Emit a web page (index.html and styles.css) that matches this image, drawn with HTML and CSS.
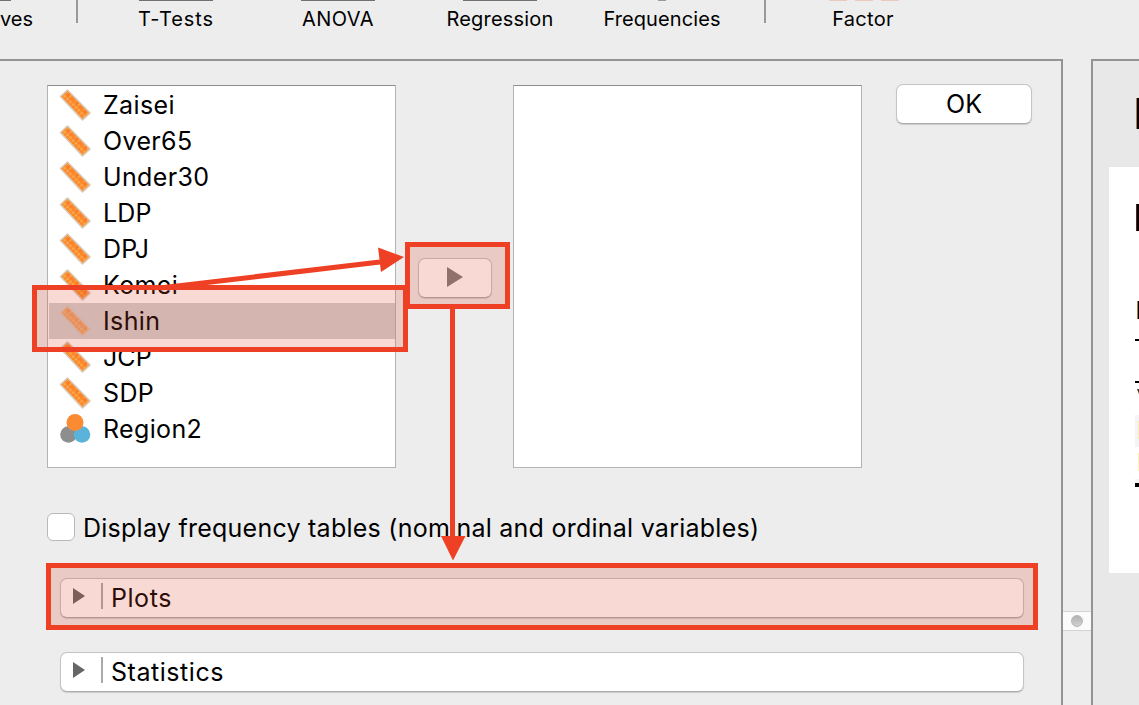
FILE: index.html
```
<!DOCTYPE html>
<html lang="en">
<head>
<meta charset="utf-8">
<title>Descriptives</title>
<link rel="stylesheet" href="styles.css">
</head>
<body>
<svg width="0" height="0" class="defs">
  <defs>
    <pattern id="grain" width="4" height="4" patternUnits="userSpaceOnUse" patternTransform="rotate(45)">
      <rect width="4" height="4" fill="#fb9130"/>
      <rect width="2" height="2" fill="#fda84c"/>
      <rect x="2" y="2" width="2" height="2" fill="#fa8430"/>
    </pattern>
    <symbol id="ruler" viewBox="0 0 32 32">
      <path d="M1.5 7.5L8.500 1L31 24L23.500 31Z" fill="url(#grain)" stroke="#d9c8b4" stroke-width="1.600" stroke-linejoin="round"/>
      <path d="M8 4L28 24.500" stroke="#ff7622" stroke-width="2.500" stroke-dasharray="4 2" opacity=".7"/>
    </symbol>
    <symbol id="nominal" viewBox="0 0 32 32">
      <circle cx="9.500" cy="21.500" r="8.300" fill="#8e8e8e"/>
      <circle cx="23" cy="21.500" r="8.300" fill="#5ab3da"/>
      <circle cx="16" cy="9.500" r="8.500" fill="#fb8b33"/>
    </symbol>
  </defs>
</svg>
<div class="window">
  <header class="toolbar">
    <div class="tool tool-cut"><i class="edge edge-cut"></i><span class="t-ves">ves</span></div>
    <i class="sep"></i>
    <div class="tool tool-first"><i class="edge"></i><span class="t-ttest">T-Tests</span></div>
    <div class="tool"><i class="edge"></i><span class="t-anova">ANOVA</span></div>
    <div class="tool"><i class="edge"></i><span class="t-reg">Regression</span></div>
    <div class="tool"><i class="edge edge-dot"></i><span class="t-freq">Frequencies</span></div>
    <i class="sep sep-last"></i>
    <div class="tool tool-factor"><div class="pinks"><i></i><i></i><i></i></div><span class="t-factor">Factor</span></div>
  </header>
  <main class="workspace">
    <section class="analysis">
      <div class="assign">
        <ul class="list">
          <li><svg><use href="#ruler"/></svg><span>Zaisei</span></li>
          <li><svg><use href="#ruler"/></svg><span>Over65</span></li>
          <li><svg><use href="#ruler"/></svg><span>Under30</span></li>
          <li><svg><use href="#ruler"/></svg><span class="caps">LDP</span></li>
          <li><svg><use href="#ruler"/></svg><span class="caps">DPJ</span></li>
          <li><svg><use href="#ruler"/></svg><span>Komei</span></li>
          <li class="selected"><svg><use href="#ruler"/></svg><span>Ishin</span></li>
          <li><svg><use href="#ruler"/></svg><span class="caps">JCP</span></li>
          <li><svg><use href="#ruler"/></svg><span>SDP</span></li>
          <li><svg><use href="#nominal"/></svg><span>Region2</span></li>
        </ul>
        <button class="btn move"><svg width="16" height="20" viewBox="0 0 16 20"><path d="M0 0L16 10L0 20Z" fill="#7e7e7e"/></svg></button>
        <div class="list target"></div>
        <button class="btn ok"><span>OK</span></button>
      </div>
      <label class="check"><i class="box"></i><span class="t-display">Display frequency tables (nominal and ordinal variables)</span></label>
      <div class="btn section"><svg width="12" height="16" viewBox="0 0 12 16"><path d="M0 0L12 8L0 16Z" fill="#666"/></svg><i class="rule"></i><span>Plots</span></div>
      <div class="btn section"><svg width="12" height="16" viewBox="0 0 12 16"><path d="M0 0L12 8L0 16Z" fill="#666"/></svg><i class="rule"></i><span>Statistics</span></div>
    </section>
    <div class="splitter"><div class="grip"><i></i></div></div>
    <aside class="results">
      <i class="stem stem-title"></i>
      <div class="sheet">
        <i class="stem stem-head"></i>
        <i class="stem stem-sub"></i>
        <i class="line line-top"></i>
        <i class="line line-mid"></i>
        <i class="tick"></i>
        <div class="stripe"><i></i></div>
        <i class="yellow"></i>
        <i class="line line-end"></i>
      </div>
    </aside>
  </main>
  <div class="callout callout-row"></div>
  <div class="callout callout-move"></div>
  <div class="callout callout-plots"></div>
  <svg class="arrows" width="1139" height="705" viewBox="0 0 1139 705" fill="#ee4025">
    <path d="M160 288L380 262" stroke="#ee4025" stroke-width="5"/>
    <path d="M378 247.500L404 257L381 272Z"/>
    <path d="M450 307H455V540H450Z"/>
    <path d="M441 536H465.500L453 560.500Z"/>
  </svg>
</div>
</body>
</html>
```
FILE: styles.css
```
* { box-sizing: border-box; }
body { margin: 0; background: #ededed; font-family: Inter, "Liberation Sans", sans-serif; color: #000; overflow: hidden; }
i { display: block; font-style: normal; flex: none; }
svg { display: block; flex: none; }
span { white-space: nowrap; }
.defs { position: absolute; }
.window { position: relative; width: 1139px; height: 705px; overflow: hidden; display: flex; flex-direction: column; }

.toolbar { display: flex; height: 59px; flex: none; font-size: 20px; line-height: 24px; }
.tool { width: 162px; flex: none; display: flex; flex-direction: column; align-items: center; gap: 6px; }
.tool-cut { width: 76px; align-items: flex-start; }
.tool-first { margin-left: 17px; }
.edge { width: 74px; height: 1px; background: #737071; }
.edge-cut { width: 11px; }
.edge-dot { width: 8px; background: #999; }
.sep { width: 2px; height: 23px; background: #999; }
.sep-last { margin-left: 21px; }
.tool-factor { margin-left: 17px; }
.pinks { display: flex; gap: 8px; }
.pinks i { width: 18px; height: 1px; background: #e9cbbb; }
.t-ttest { letter-spacing: .9px; }
.t-anova { letter-spacing: .45px; }
.t-reg { letter-spacing: .2px; }
.t-freq { letter-spacing: .1px; }
.t-factor { letter-spacing: .3px; margin-left: -2px; }

.workspace { display: flex; height: 646px; }
.analysis { width: 1063px; flex: none; border: 2px solid #949494; border-left: 0; border-bottom: 0; padding: 24px 0 0 47px; font-size: 25px; line-height: 36px; }
.assign { display: flex; height: 383px; }
.list { width: 349px; height: 383px; flex: none; margin: 0; padding: 1px 0 0 1px; list-style: none; background: #fff; border: 1px solid #b4b4b4; border-top-color: #8e8e8e; }
.list li { display: flex; height: 36px; align-items: center; padding-left: 10px; gap: 12px; letter-spacing: .36px; }
.list .caps { letter-spacing: .1px; }
.list svg { width: 32px; height: 32px; }
.list .selected { background: #d2d2d2; }
.selected svg { opacity: .6; }
.btn { display: flex; align-items: center; justify-content: center; background: #fff; border: 1px solid #c4c4c4; border-bottom-color: #adadad; border-radius: 7px; box-shadow: 0 1px 1px rgba(0,0,0,.14); height: 40px; padding: 0; font: inherit; color: inherit; flex: none; }
.move { width: 74px; margin: 173px 0 0 22px; padding: 0 1px 2px 0; }
.target { margin-left: 21px; }
.ok { width: 136px; margin: -1px 0 0 34px; }
.check { display: flex; height: 28px; margin-top: 45px; align-items: center; gap: 8px; }
.t-display { letter-spacing: .25px; padding-top: 2px; }
.box { width: 28px; height: 28px; background: #fff; border: 1px solid #b9b9b9; border-radius: 6px; }
.section { width: 964px; margin: 37px 0 0 13px; justify-content: flex-start; padding-left: 12px; letter-spacing: .55px; }
.section + .section { margin-top: 34px; }
.section svg { margin-top: -4px; }
.rule { width: 2px; height: 26px; margin: -4px 8px 0 16px; background: #aaa; }

.splitter { width: 28px; flex: none; padding-top: 552px; }
.grip { height: 20px; background: #fbfbfb; border: solid #d3d3d3; border-width: 1px 0; display: flex; align-items: center; justify-content: center; }
.grip i { width: 12px; height: 12px; border-radius: 50%; background: linear-gradient(#b2b2b2, #d0d0d0); border: 1px solid #b7b7b7; }
.results { width: 48px; flex: none; background: #e8e8e8; border: 2px solid #949494; border-width: 2px 0 0 2px; padding: 37px 0 0 16px; }
.stem { background: #000; width: 4px; border-left: 1px solid #ba7b3e; }
.stem-title { height: 31px; margin-left: 27px; }
.sheet { height: 406px; margin-top: 38px; background: #fff; padding-top: 37px; overflow: hidden; }
.stem-head { height: 27px; margin-left: 27px; border-left-color: #5b2114; }
.stem-sub { height: 18px; margin: 70px 0 0 28px; }
.line { height: 2px; margin-left: 26px; background: #000; }
.line-top { margin-top: 20px; }
.line-mid { margin-top: 40px; }
.tick { width: 2px; height: 5px; margin: 6px 0 0 28px; background: #51331d; clip-path: polygon(0 0, 100% 0, 100% 100%); }
.stripe { height: 32px; margin: 21px 0 0 26px; background: #f4f4f4; padding: 6px 0 0 3px; }
.stripe i, .yellow { width: 1px; height: 18px; background: #faedb9; }
.yellow { margin: 6px 0 0 29px; background: #fff3bd; }
.line-end { height: 8px; margin-top: 8px; border-top: 4px solid #f4f4f4; }

.callout { position: absolute; border: 5px solid #ee4025; background: rgba(220,65,35,.2); }
.callout-row { left: 32px; top: 285px; width: 376px; height: 67px; }
.callout-move { left: 405px; top: 242px; width: 105px; height: 67px; }
.callout-plots { left: 46px; top: 563px; width: 992px; height: 67px; }
.arrows { position: absolute; left: 0; top: 0; }
```
